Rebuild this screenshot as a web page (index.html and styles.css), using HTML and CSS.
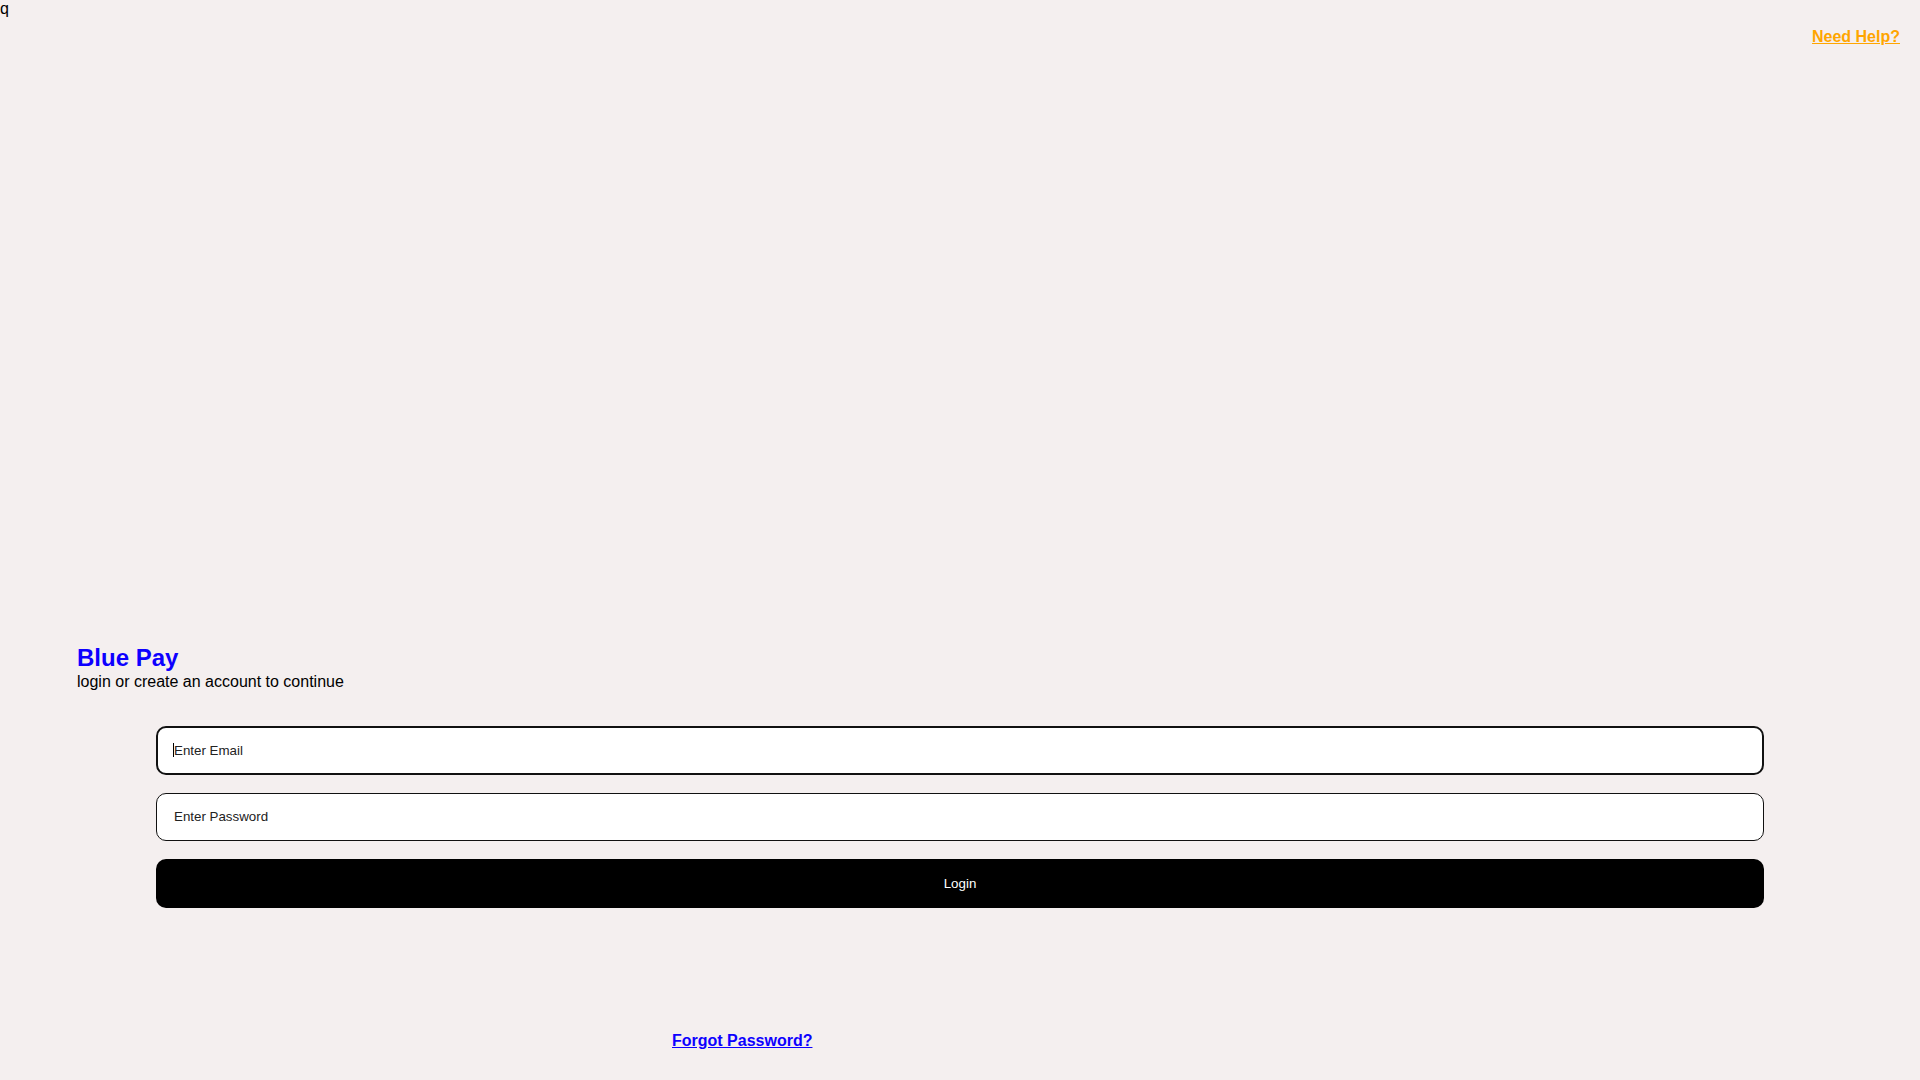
FILE: index.html
```html
<!DOCTYPE html>
<html lang="en">
<head>
<meta charset="utf-8">
<title>Blue Pay</title>
<link rel="stylesheet" href="styles.css">
</head>
<body>
<div class="stray">q</div>
<header class="topbar">
  <a class="help" href="#">Need Help?</a>
</header>
<main class="auth">
  <div class="brand">
    <h1 class="brand-title">Blue Pay</h1>
    <p class="brand-sub">login or create an account to continue</p>
  </div>
  <form class="login-form">
    <label class="field">
      <input class="input input-active" type="email" placeholder="Enter Email">
      <span class="caret"></span>
    </label>
    <label class="field">
      <input class="input" type="password" placeholder="Enter Password">
    </label>
    <button class="btn" type="button">Login</button>
  </form>
  <div class="forgot-row">
    <a class="forgot" href="#">Forgot Password?</a>
  </div>
</main>
</body>
</html>
```

FILE: styles.css
```css
html, body {
  margin: 0;
  padding: 0;
}
body {
  background: #f4efef;
  font-family: "Liberation Sans", Arial, sans-serif;
  font-size: 16px;
  color: #000;
  min-height: 1080px;
}
.stray {
  line-height: 18px;
  height: 18px;
}
.topbar {
  display: flex;
  justify-content: flex-end;
  padding: 10px 20px 0 0;
}
.help {
  color: #ffa500;
  font-weight: bold;
  text-decoration: underline;
}
.auth {
  padding-top: 598px;
}
.brand {
  padding-left: 77px;
}
.brand-title {
  margin: 0;
  font-size: 24px;
  font-weight: bold;
  color: #0d00ff;
  line-height: 28px;
}
.brand-sub {
  margin: 1px 0 0;
  font-size: 16px;
  line-height: 18px;
}
.login-form {
  width: 1608px;
  margin: 35px auto 0;
  display: flex;
  flex-direction: column;
  gap: 18px;
}
.field {
  position: relative;
  display: block;
}
.input {
  box-sizing: border-box;
  width: 100%;
  height: 48.5px;
  border: 1px solid #111;
  border-radius: 10px;
  background: #fff;
  padding: 0 17px;
  font-family: "Liberation Sans", Arial, sans-serif;
  font-size: 13.33px;
  color: #222;
  outline: none;
}
.input::placeholder {
  color: #222;
  opacity: 1;
}
.input-active {
  border: 2px solid #111;
  padding: 0 16px;
}
.caret {
  position: absolute;
  left: 17px;
  top: 17px;
  width: 1px;
  height: 14px;
  background: #000;
}
.btn {
  height: 48.5px;
  border: none;
  border-radius: 10px;
  background: #000;
  color: #fff;
  font-family: "Liberation Sans", Arial, sans-serif;
  font-size: 13.33px;
  cursor: pointer;
}
.forgot-row {
  margin-top: 124.5px;
  padding-left: 672px;
}
.forgot {
  color: #0d00ff;
  font-weight: bold;
  text-decoration: underline;
}
```
